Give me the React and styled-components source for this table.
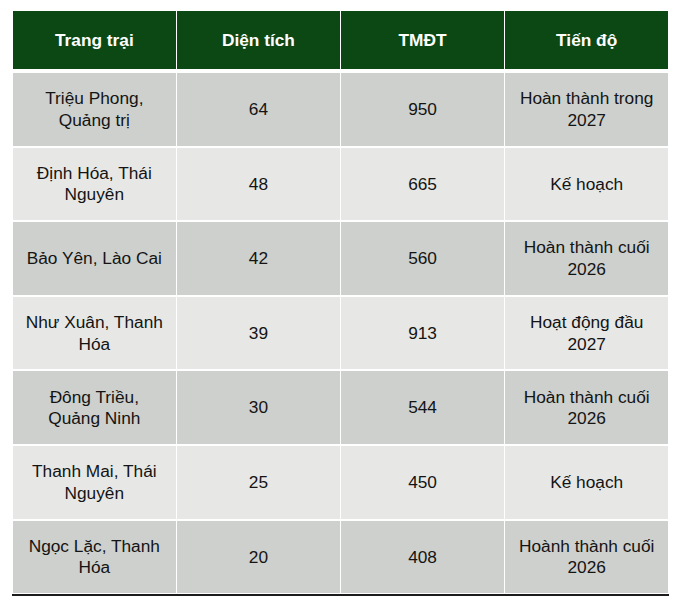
import React from 'react'
import styled, { createGlobalStyle } from 'styled-components'

const rows = [
  ['Triệu Phong,\nQuảng trị', '64', '950', 'Hoàn thành trong\n2027'],
  ['Định Hóa, Thái\nNguyên', '48', '665', 'Kế hoạch'],
  ['Bảo Yên, Lào Cai', '42', '560', 'Hoàn thành cuối\n2026'],
  ['Như Xuân, Thanh\nHóa', '39', '913', 'Hoạt động đầu\n2027'],
  ['Đông Triều,\nQuảng Ninh', '30', '544', 'Hoàn thành cuối\n2026'],
  ['Thanh Mai, Thái\nNguyên', '25', '450', 'Kế hoạch'],
  ['Ngọc Lặc, Thanh\nHóa', '20', '408', 'Hoành thành cuối\n2026'],
]

const headers = ['Trang trại', 'Diện tích', 'TMĐT', 'Tiến độ']

export default function App() {
  return (
    <Root>
      <GlobalStyle />
      <Table>
        <HeadRow>
          {headers.map((h) => (
            <HeadCell key={h}>{h}</HeadCell>
          ))}
        </HeadRow>
        {rows.map((r, i) => (
          <Row key={i} $dark={i % 2 === 0}>
            {r.map((c, j) => (
              <Cell key={j}>{c}</Cell>
            ))}
          </Row>
        ))}
      </Table>
    </Root>
  )
}

const GlobalStyle = createGlobalStyle`
  body {
    margin: 0;
    background: #ffffff;
    font-family: "Liberation Sans", Arial, sans-serif;
  }
`

const Root = styled.div`
  padding: 11px 0 0 12px;
`

const Table = styled.div`
  width: 655px;
  display: flex;
  flex-direction: column;
  gap: 2px;
  padding: 0 1px 1px 1px;
  border-bottom: 2px solid #1c1c1c;
`

const HeadRow = styled.div`
  display: grid;
  grid-template-columns: repeat(4, 1fr);
  column-gap: 1.5px;
  height: 58px;
  margin-bottom: 2px;
`

const HeadCell = styled.div`
  background: #0b4814;
  color: #ffffff;
  font-weight: bold;
  font-size: 17.3px;
  display: flex;
  align-items: center;
  justify-content: center;
`

const Row = styled.div`
  display: grid;
  grid-template-columns: repeat(4, 1fr);
  column-gap: 1.5px;
  height: 72.6px;
  & > div {
    background: ${(p) => (p.$dark ? '#cdd0cd' : '#e7e8e6')};
  }
`

const Cell = styled.div`
  color: #141414;
  font-size: 17.3px;
  line-height: 21.5px;
  white-space: pre-line;
  text-align: center;
  display: flex;
  align-items: center;
  justify-content: center;
  padding-top: 1px;
`
